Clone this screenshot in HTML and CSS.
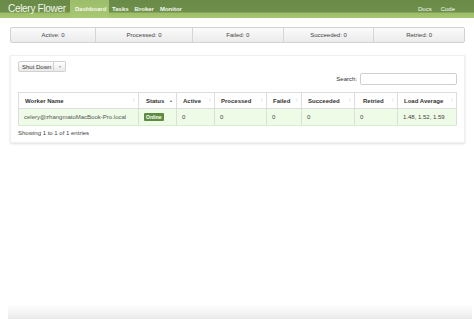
FILE: index.html
```html
<!DOCTYPE html>
<html lang="en">
  <head>
    <meta charset="UTF-8" />
    <title>Celery Flower</title>
    <link rel="stylesheet" href="styles.css">
  </head>
  <body>
    <!-- Navbar -->
    <nav class="navbar">
      <a class="brand">Celery Flower</a>
      <ul class="nav">
        <li class="active">Dashboard</li>
        <li>Tasks</li>
        <li>Broker</li>
        <li>Monitor</li>
      </ul>
      <ul class="nav nav-right">
        <li>Docs</li>
        <li>Code</li>
      </ul>
    </nav>

    <main>
      <!-- Stats -->
      <div class="stats">
        <div class="stat">Active: 0</div>
        <div class="stat">Processed: 0</div>
        <div class="stat">Failed: 0</div>
        <div class="stat">Succeeded: 0</div>
        <div class="stat">Retried: 0</div>
      </div>

      <!-- Workers -->
      <div class="panel">
        <div class="btn-group">
          <button class="btn">Shut Down</button>
          <button class="btn caret-btn"><span class="caret"></span></button>
        </div>
        <div class="search">
          <label>Search:</label>
          <input type="text">
        </div>
        <table class="workers">
          <thead>
            <tr>
              <th class="c-name">Worker Name<span class="sort">&#8597;</span></th>
              <th class="c-status">Status<span class="sort on">&#9650;</span></th>
              <th class="c-active">Active<span class="sort">&#8597;</span></th>
              <th class="c-proc">Processed<span class="sort">&#8597;</span></th>
              <th class="c-failed">Failed<span class="sort">&#8597;</span></th>
              <th class="c-succ">Succeeded<span class="sort">&#8597;</span></th>
              <th class="c-retr">Retried<span class="sort">&#8597;</span></th>
              <th class="c-load">Load Average<span class="sort">&#8597;</span></th>
            </tr>
          </thead>
          <tbody>
            <tr>
              <td>celery@zhangmatoMacBook-Pro.local</td>
              <td><span class="label">Online</span></td>
              <td>0</td>
              <td>0</td>
              <td>0</td>
              <td>0</td>
              <td>0</td>
              <td>1.48, 1.52, 1.59</td>
            </tr>
          </tbody>
        </table>
        <p class="info">Showing 1 to 1 of 1 entries</p>
      </div>
    </main>

    <div class="bottom-shade"></div>
  </body>
</html>
```

FILE: styles.css
```css
* {
  margin: 0;
  padding: 0;
  box-sizing: border-box;
}

body {
  font-family: 'Liberation Sans', Arial, sans-serif;
  font-size: 6px;
  color: #333333;
  background-color: #ffffff;
  width: 474px;
  height: 321px;
  display: flex;
  flex-direction: column;
  overflow: hidden;
}

/* Navbar */
.navbar {
  height: 18px;
  display: flex;
  align-items: stretch;
  padding-left: 8px;
  padding-right: 16px;
  background: linear-gradient(to bottom, #6a8b47 0, #6e8f4b 12px, #9dbd69 13px, #a7c672 18px);
}

.brand {
  color: #f2f7ea;
  font-size: 10px;
  letter-spacing: -0.3px;
  line-height: 18px;
  width: 62px;
}

.nav {
  list-style: none;
  display: flex;
  align-items: stretch;
}

.nav li {
  color: #f4f8ee;
  font-size: 6px;
  font-weight: bold;
  line-height: 18px;
  padding: 0 3px;
}

.nav li.active {
  background: linear-gradient(to bottom, #9cbd69, #a9c874);
  padding: 0 4px 0 5px;
  width: 39px;
}

.nav-right {
  margin-left: auto;
}

.nav-right li {
  font-weight: normal;
  padding: 0 3px 0 6px;
}

main {
  padding: 9px 9px 0 10px;
  display: flex;
  flex-direction: column;
}

/* Stats */
.stats {
  display: flex;
  height: 16px;
  border: 1px solid #d2d2d2;
  border-radius: 2px;
  background: linear-gradient(to bottom, #fbfbfb, #ebebeb);
}

.stat {
  flex: 1;
  text-align: center;
  line-height: 14px;
  color: #444444;
  font-size: 6px;
  border-left: 1px solid #d6d6d6;
}

.stat:first-child {
  flex: 0 0 84px;
  border-left: none;
}

.stat:nth-child(2) {
  flex: 0 0 97px;
}

/* Panel */
.panel {
  margin-top: 12px;
  padding: 5px 7px 6px 7px;
  background-color: #ffffff;
  border: 1px solid #f0f0f0;
  box-shadow: 0 1px 2px rgba(0, 0, 0, 0.12);
}

.btn-group {
  display: flex;
  height: 11px;
}

.btn {
  font-family: inherit;
  font-size: 6px;
  color: #333333;
  white-space: nowrap;
  background: linear-gradient(to bottom, #ffffff, #e9e9e9);
  border: 1px solid #d0d0d0;
  border-radius: 2px 0 0 2px;
  padding: 0 3px;
  height: 11px;
  width: 36px;
}

.caret-btn {
  width: 12px;
  border-left: none;
  border-radius: 0 2px 2px 0;
  display: flex;
  align-items: center;
  justify-content: center;
}

.caret {
  width: 0;
  height: 0;
  border-left: 1.5px solid transparent;
  border-right: 1.5px solid transparent;
  border-top: 2px solid #999999;
}

.search {
  display: flex;
  justify-content: flex-end;
  align-items: center;
  gap: 3px;
  margin-top: 1px;
  height: 12px;
}

.search label {
  font-size: 6px;
  color: #333333;
}

.search input {
  width: 97px;
  height: 12px;
  border: 1px solid #cfcfcf;
  border-radius: 2px;
  background-color: #ffffff;
}

/* Table */
.workers {
  margin-top: 7px;
  width: 100%;
  border-collapse: collapse;
  border: 1px solid #dddddd;
  table-layout: fixed;
}

.workers th {
  position: relative;
  text-align: left;
  font-weight: bold;
  font-size: 6px;
  color: #333333;
  height: 16px;
  padding: 0 6px;
  border-left: 1px solid #dddddd;
  border-bottom: 1px solid #dddddd;
}

.workers td {
  font-size: 6px;
  color: #444444;
  height: 17px;
  padding: 0 5px;
  background-color: #eefbe6;
  border-left: 1px solid #dddddd;
  border-bottom: 1px solid #d8ecd0;
}

.workers td:first-child {
  color: #555555;
}

.sort {
  position: absolute;
  right: 3px;
  top: 4px;
  font-size: 5px;
  font-weight: normal;
  color: #cccccc;
}

.sort.on {
  color: #888888;
  font-size: 4px;
  top: 5px;
}

.c-name { width: 120px; }
.c-status { width: 38px; }
.c-active { width: 38px; }
.c-proc { width: 52px; }
.c-failed { width: 35px; }
.c-succ { width: 53px; }
.c-retr { width: 43px; }

th.c-status { padding-left: 7px; }
th.c-retr { padding-left: 8px; }

.label {
  display: inline-block;
  background-color: #5d8b3f;
  color: #ffffff;
  font-weight: bold;
  font-size: 5px;
  padding: 1px 2px;
  border-radius: 1px;
}

.info {
  margin-top: 4px;
  font-size: 6px;
  color: #444444;
}

.bottom-shade {
  margin: auto 2px 2px 8px;
  height: 15px;
  background: linear-gradient(to bottom, #ffffff, #f1f1f1 70%, #e9e9e9);
}
```
